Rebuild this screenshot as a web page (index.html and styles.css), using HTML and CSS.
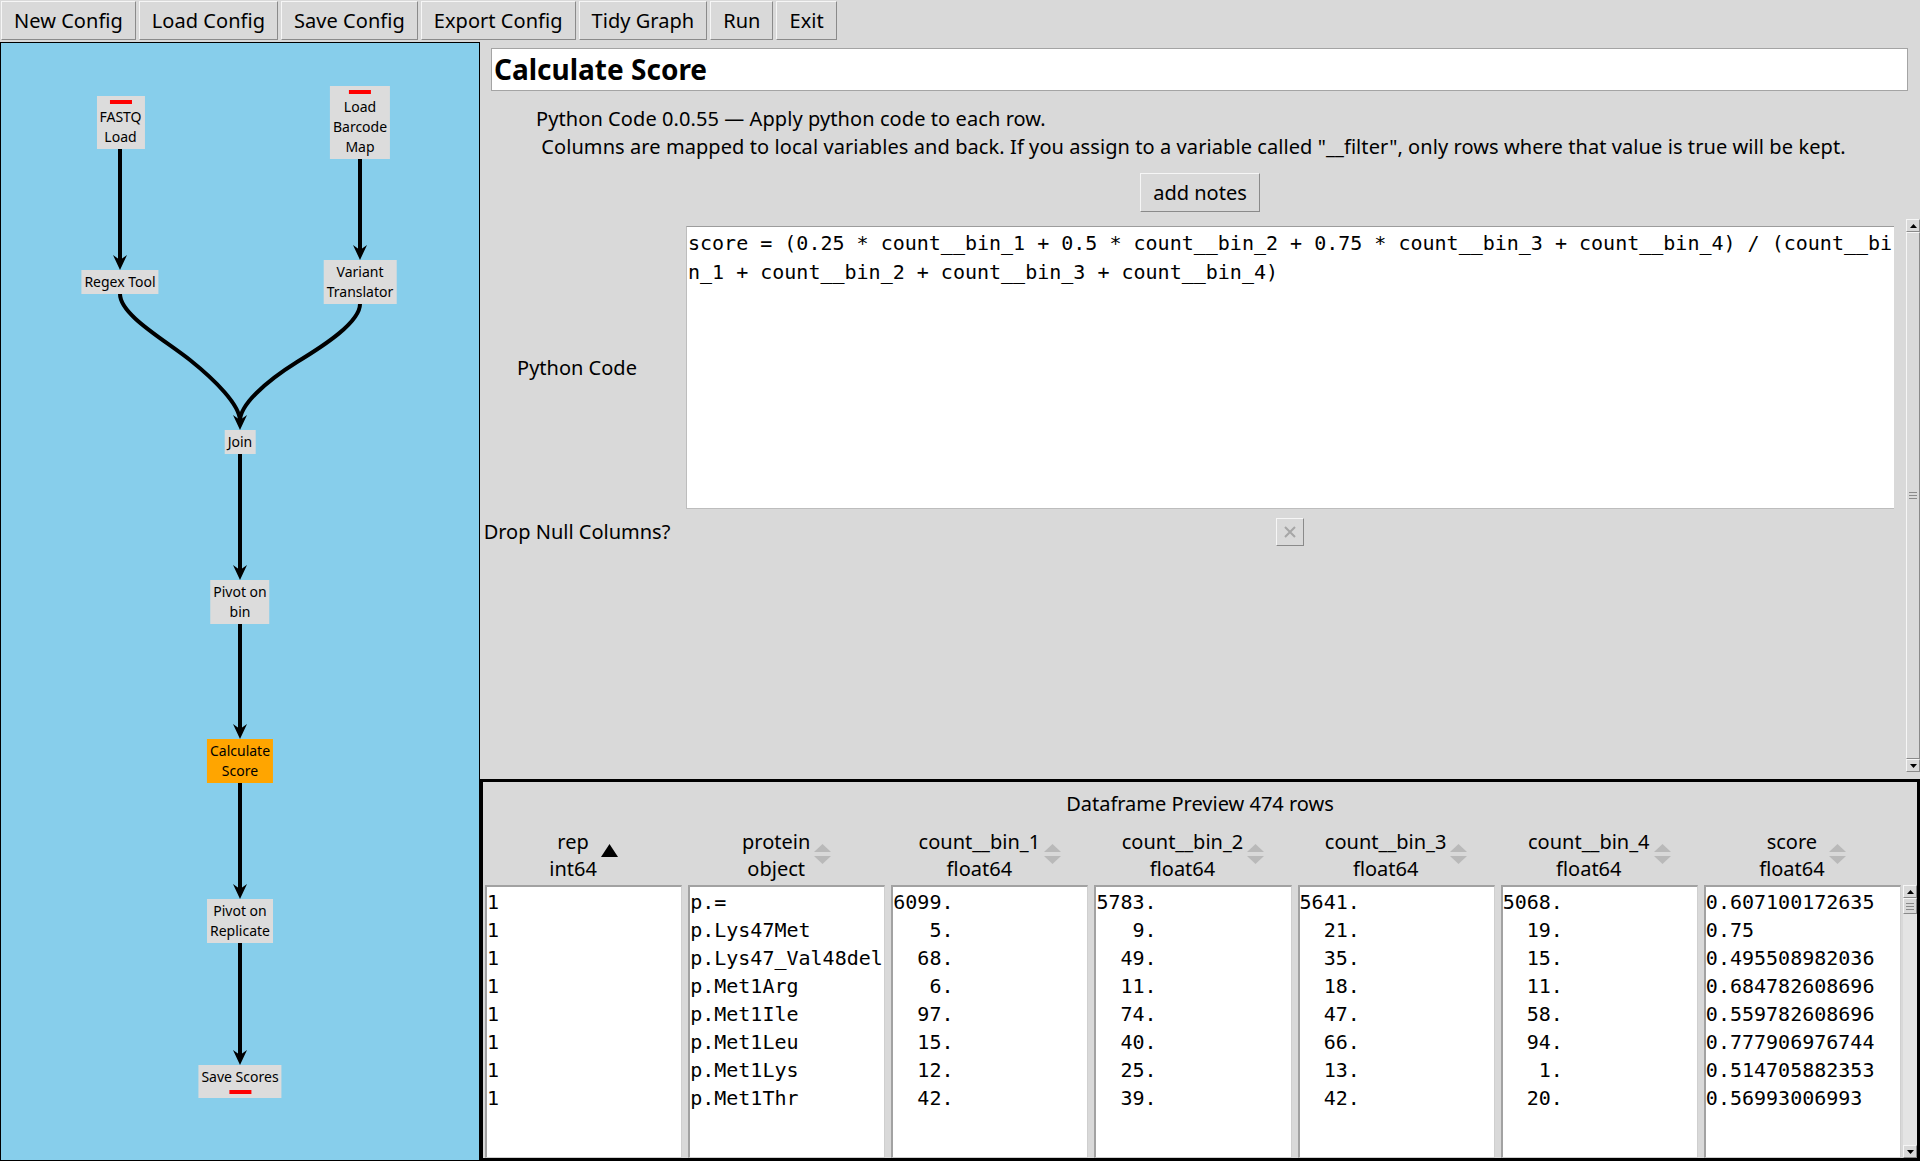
FILE: index.html
```html
<!DOCTYPE html>
<html>
<head>
<meta charset="utf-8">
<title>Calculate Score</title>
<link rel="stylesheet" href="styles.css">
</head>
<body>
<div class="app">
  <div class="toolbar">
    <button class="tb-btn">New Config</button>
    <button class="tb-btn">Load Config</button>
    <button class="tb-btn">Save Config</button>
    <button class="tb-btn">Export Config</button>
    <button class="tb-btn">Tidy Graph</button>
    <button class="tb-btn">Run</button>
    <button class="tb-btn">Exit</button>
  </div>
  <div class="main">
    <div class="graph">
      <svg class="edges" width="478" height="1117" viewBox="1 43 478 1117">
        <g class="edge-lines">
          <path d="M120 149 V261"/>
          <path d="M360 159 V251"/>
          <path d="M120 294 C120 315,165 340,190 360 C215 380,240 405,240 421"/>
          <path d="M360 304 C360 322,325 345,297 362 C265 382,240 405,240 421"/>
          <path d="M240 454 V571"/>
          <path d="M240 624 V730"/>
          <path d="M240 783 V890"/>
          <path d="M240 943 V1056"/>
        </g>
        <g class="edge-heads">
          <polygon points="120,270 113,255 120,260 127,255"/>
          <polygon points="360,260 353,245 360,250 367,245"/>
          <polygon points="240,430 233,415 240,420 247,415"/>
          <polygon points="240,580 233,565 240,570 247,565"/>
          <polygon points="240,739 233,724 240,729 247,724"/>
          <polygon points="240,899 233,884 240,889 247,884"/>
          <polygon points="240,1065 233,1050 240,1055 247,1050"/>
        </g>
      </svg>
      <div class="node n-fastq"><span class="bar"></span>FASTQ<br>Load</div>
      <div class="node n-barcode"><span class="bar"></span>Load<br>Barcode<br>Map</div>
      <div class="node n-regex">Regex Tool</div>
      <div class="node n-variant">Variant<br>Translator</div>
      <div class="node n-join">Join</div>
      <div class="node n-pbin">Pivot on<br>bin</div>
      <div class="node n-calc active">Calculate<br>Score</div>
      <div class="node n-prep">Pivot on<br>Replicate</div>
      <div class="node n-save">Save Scores<span class="bar bar-bottom"></span></div>
    </div>

    <div class="editor">
      <div class="upper">
        <div class="title-box">Calculate Score</div>
        <div class="desc">Python Code 0.0.55 — Apply python code to each row.
 Columns are mapped to local variables and back. If you assign to a variable called "__filter", only rows where that value is true will be kept.</div>
        <div class="notes-row"><button class="btn">add notes</button></div>
        <div class="params">
          <div class="param-grid">
            <div class="plabel">Python Code</div>
            <div class="code">score = (0.25 * count__bin_1 + 0.5 * count__bin_2 + 0.75 * count__bin_3 + count__bin_4) / (count__bin_1 + count__bin_2 + count__bin_3 + count__bin_4)</div>
            <div class="plabel">Drop Null Columns?</div>
            <div class="check-cell">
              <span class="check"><svg width="12" height="12" viewBox="0 0 12 12"><path d="M1 1 L11 11 M11 1 L1 11"/></svg></span>
            </div>
          </div>
          <div class="vscroll">
            <div class="sb-arrow"><svg width="7" height="4" viewBox="0 0 7 4"><polygon points="3.5,0 7,4 0,4"/></svg></div>
            <div class="sb-thumb"><span class="grip"></span></div>
            <div class="sb-arrow"><svg width="7" height="4" viewBox="0 0 7 4"><polygon points="0,0 7,0 3.5,4"/></svg></div>
          </div>
        </div>
      </div>

      <div class="preview">
        <div class="pv-title">Dataframe Preview 474 rows</div>
        <div class="pv-table">
          <div class="pv-cols">
            <div class="hdr"><div class="hdr-text">rep<br>int64</div><svg class="sort-on" width="17" height="13" viewBox="0 0 17 13"><polygon points="8.5,0 17,13 0,13"/></svg></div>
            <div class="hdr"><div class="hdr-text">protein<br>object</div><svg class="sort-off" width="17" height="20" viewBox="0 0 17 20"><polygon points="8.5,0 17,8 0,8"/><polygon points="0,12 17,12 8.5,20"/></svg></div>
            <div class="hdr"><div class="hdr-text">count__bin_1<br>float64</div><svg class="sort-off" width="17" height="20" viewBox="0 0 17 20"><polygon points="8.5,0 17,8 0,8"/><polygon points="0,12 17,12 8.5,20"/></svg></div>
            <div class="hdr"><div class="hdr-text">count__bin_2<br>float64</div><svg class="sort-off" width="17" height="20" viewBox="0 0 17 20"><polygon points="8.5,0 17,8 0,8"/><polygon points="0,12 17,12 8.5,20"/></svg></div>
            <div class="hdr"><div class="hdr-text">count__bin_3<br>float64</div><svg class="sort-off" width="17" height="20" viewBox="0 0 17 20"><polygon points="8.5,0 17,8 0,8"/><polygon points="0,12 17,12 8.5,20"/></svg></div>
            <div class="hdr"><div class="hdr-text">count__bin_4<br>float64</div><svg class="sort-off" width="17" height="20" viewBox="0 0 17 20"><polygon points="8.5,0 17,8 0,8"/><polygon points="0,12 17,12 8.5,20"/></svg></div>
            <div class="hdr"><div class="hdr-text">score<br>float64</div><svg class="sort-off" width="17" height="20" viewBox="0 0 17 20"><polygon points="8.5,0 17,8 0,8"/><polygon points="0,12 17,12 8.5,20"/></svg></div>

            <div class="cell">1
1
1
1
1
1
1
1</div>
            <div class="cell">p.=
p.Lys47Met
p.Lys47_Val48del
p.Met1Arg
p.Met1Ile
p.Met1Leu
p.Met1Lys
p.Met1Thr</div>
            <div class="cell">6099.
   5.
  68.
   6.
  97.
  15.
  12.
  42.</div>
            <div class="cell">5783.
   9.
  49.
  11.
  74.
  40.
  25.
  39.</div>
            <div class="cell">5641.
  21.
  35.
  18.
  47.
  66.
  13.
  42.</div>
            <div class="cell">5068.
  19.
  15.
  11.
  58.
  94.
   1.
  20.</div>
            <div class="cell">0.607100172635
0.75
0.495508982036
0.684782608696
0.559782608696
0.777906976744
0.514705882353
0.56993006993</div>
          </div>
          <div class="tscroll-col">
            <div class="tscroll">
              <div class="sb-arrow"><svg width="7" height="4" viewBox="0 0 7 4"><polygon points="3.5,0 7,4 0,4"/></svg></div>
              <div class="ts-thumb"><span class="grip small"></span></div>
              <div class="ts-trough"></div>
              <div class="sb-arrow"><svg width="7" height="4" viewBox="0 0 7 4"><polygon points="0,0 7,0 3.5,4"/></svg></div>
            </div>
          </div>
        </div>
      </div>
    </div>
  </div>
</div>
</body>
</html>
```

FILE: styles.css
```css
* { box-sizing: border-box; }

html, body {
  margin: 0;
  padding: 0;
}

body {
  width: 1920px;
  height: 1161px;
  overflow: hidden;
  background: #d9d9d9;
  font-family: "Noto Sans", "DejaVu Sans", sans-serif;
  font-size: 20px;
  color: #000;
}

.app {
  display: flex;
  flex-direction: column;
  height: 1161px;
}

/* ---------- toolbar ---------- */
.toolbar {
  flex: none;
  display: flex;
  height: 42px;
  padding: 1px 0 2px 1px;
}

.tb-btn,
.btn {
  font: inherit;
  color: #000;
  height: 39px;
  padding: 0 12px;
  background: #d9d9d9;
  border: 1px solid;
  border-color: #f6f6f6 #8a8a8a #8a8a8a #f6f6f6;
  line-height: 36px;
  cursor: default;
}

.tb-btn {
  margin-right: 3px;
  letter-spacing: 0.04px;
}

/* ---------- main ---------- */
.main {
  flex: 1;
  display: flex;
  min-height: 0;
}

.graph {
  position: relative;
  flex: none;
  width: 480px;
  background: #87ceeb;
  border: 1px solid #000;
}

.edges {
  position: absolute;
  left: 0;
  top: 0;
}

.edge-lines path {
  fill: none;
  stroke: #000;
  stroke-width: 4;
}

.edge-heads polygon { fill: #000; }

.node {
  position: absolute;
  transform: translateX(-50%);
  background: #dcdcdc;
  color: #000;
  font-size: 14px;
  line-height: 20px;
  padding: 2px 3px;
  text-align: center;
  white-space: nowrap;
}

.node.active { background: #ffa500; }

.bar {
  display: block;
  width: 22px;
  height: 4px;
  background: #ff0000;
  margin: 2px auto 3px;
}

.bar.bar-bottom { margin: 3px auto 2px; }

.n-fastq   { left: 119.5px; top: 53px; }
.n-barcode { left: 359px;   top: 43px; }
.n-regex   { left: 119px;   top: 227px; }
.n-variant { left: 359px;   top: 217px; }
.n-join    { left: 239px;   top: 387px; }
.n-pbin    { left: 239px;   top: 537px; }
.n-calc    { left: 239px;   top: 696px; }
.n-prep    { left: 239px;   top: 856px; }
.n-save    { left: 239px;   top: 1022px; }

/* ---------- editor ---------- */
.editor {
  flex: 1;
  min-width: 0;
  display: flex;
  flex-direction: column;
}

.upper {
  flex: 1;
  min-height: 0;
  display: flex;
  flex-direction: column;
}

.title-box {
  flex: none;
  margin: 6px 12px 0 11px;
  height: 43px;
  background: #fff;
  border: 1px solid #a4a4a4;
  padding-left: 2px;
  font-size: 28px;
  font-weight: 700;
  line-height: 40px;
}

.desc {
  flex: none;
  margin-top: 14px;
  padding-left: 56px;
  line-height: 28px;
  letter-spacing: 0.08px;
  white-space: pre;
}

.notes-row {
  flex: none;
  margin-top: 12px;
  display: flex;
  justify-content: center;
}

.params {
  flex: 1;
  min-height: 0;
  margin: 7px 0 7px 0;
  display: flex;
}

.param-grid {
  flex: 1;
  display: grid;
  grid-template-columns: 194px 1208px;
  column-gap: 12px;
  align-content: start;
  row-gap: 9px;
  padding-top: 7px;
}

.plabel {
  display: flex;
  align-items: center;
  justify-content: center;
  line-height: 28px;
  white-space: nowrap;
}

.code {
  height: 283px;
  background: #fff;
  border: 1px solid #bdbdbd;
  border-top-color: #9c9c9c;
  border-right: 0;
  padding: 2px 0 0 1px;
  font-family: "DejaVu Sans Mono", monospace;
  font-size: 20px;
  line-height: 29px;
  white-space: pre-wrap;
  word-break: break-all;
}

.check-cell {
  display: flex;
  justify-content: center;
  align-items: center;
}

.check {
  width: 28px;
  height: 28px;
  display: flex;
  align-items: center;
  justify-content: center;
  background: #d9d9d9;
  border: 1px solid;
  border-color: #f6f6f6 #8a8a8a #8a8a8a #f6f6f6;
}

.check path {
  stroke: #a6a6a6;
  stroke-width: 2;
  fill: none;
}

/* scrollbars */
.vscroll {
  flex: none;
  width: 14px;
  display: flex;
  flex-direction: column;
  background: #c3c3c3;
}

.sb-arrow {
  flex: none;
  height: 13px;
  display: flex;
  align-items: center;
  justify-content: center;
  background: #d9d9d9;
  border: 1px solid;
  border-color: #f6f6f6 #8a8a8a #8a8a8a #f6f6f6;
}

.sb-arrow polygon { fill: #000; }

.sb-thumb {
  flex: 1;
  display: flex;
  align-items: center;
  justify-content: center;
  background: #d9d9d9;
  border: 1px solid;
  border-color: #f6f6f6 #8a8a8a #8a8a8a #f6f6f6;
}

.grip {
  width: 8px;
  height: 7px;
  border-top: 1px solid #8a8a8a;
  border-bottom: 1px solid #8a8a8a;
  background: linear-gradient(#d9d9d9 2px, #8a8a8a 2px, #8a8a8a 3px, #d9d9d9 3px);
}

/* ---------- preview ---------- */
.preview {
  flex: none;
  height: 382px;
  border: 3px solid #000;
  display: flex;
  flex-direction: column;
}

.pv-title {
  flex: none;
  margin-top: 8px;
  line-height: 28px;
  text-align: center;
}

.pv-table {
  flex: 1;
  min-height: 0;
  display: flex;
  margin-top: 9px;
  padding-left: 2px;
}

.pv-cols {
  flex: 1;
  min-width: 0;
  display: grid;
  grid-template-columns: repeat(7, 1fr);
  grid-template-rows: 56px 1fr;
  column-gap: 6px;
  row-gap: 2px;
}

.hdr {
  display: flex;
  align-items: center;
  justify-content: center;
  gap: 4px;
}

.hdr-text {
  text-align: center;
  line-height: 27px;
  white-space: nowrap;
}

.sort-on { margin-bottom: 9px; }
.sort-on polygon { fill: #000; }
.sort-off { margin-bottom: 3px; }
.sort-off polygon { fill: #b9b9b9; }

.cell {
  background: #fff;
  border-style: solid;
  border-width: 2px 1px 1px 2px;
  border-color: #a2a2a2 #cfcfcf #cfcfcf #a2a2a2;
  padding: 1px 0 0 0;
  font-family: "DejaVu Sans Mono", monospace;
  font-size: 20px;
  line-height: 28px;
  white-space: pre;
  overflow: hidden;
}

.tscroll-col {
  flex: none;
  width: 14px;
  margin-left: 2px;
  padding-top: 58px;
  display: flex;
}

.tscroll {
  flex: 1;
  display: flex;
  flex-direction: column;
  background: #e4e4e4;
}

.ts-thumb {
  flex: none;
  height: 16px;
  display: flex;
  align-items: center;
  justify-content: center;
  background: #d9d9d9;
  border: 1px solid;
  border-color: #f6f6f6 #8a8a8a #8a8a8a #f6f6f6;
}

.ts-trough { flex: 1; }

.grip.small { height: 7px; }
```
